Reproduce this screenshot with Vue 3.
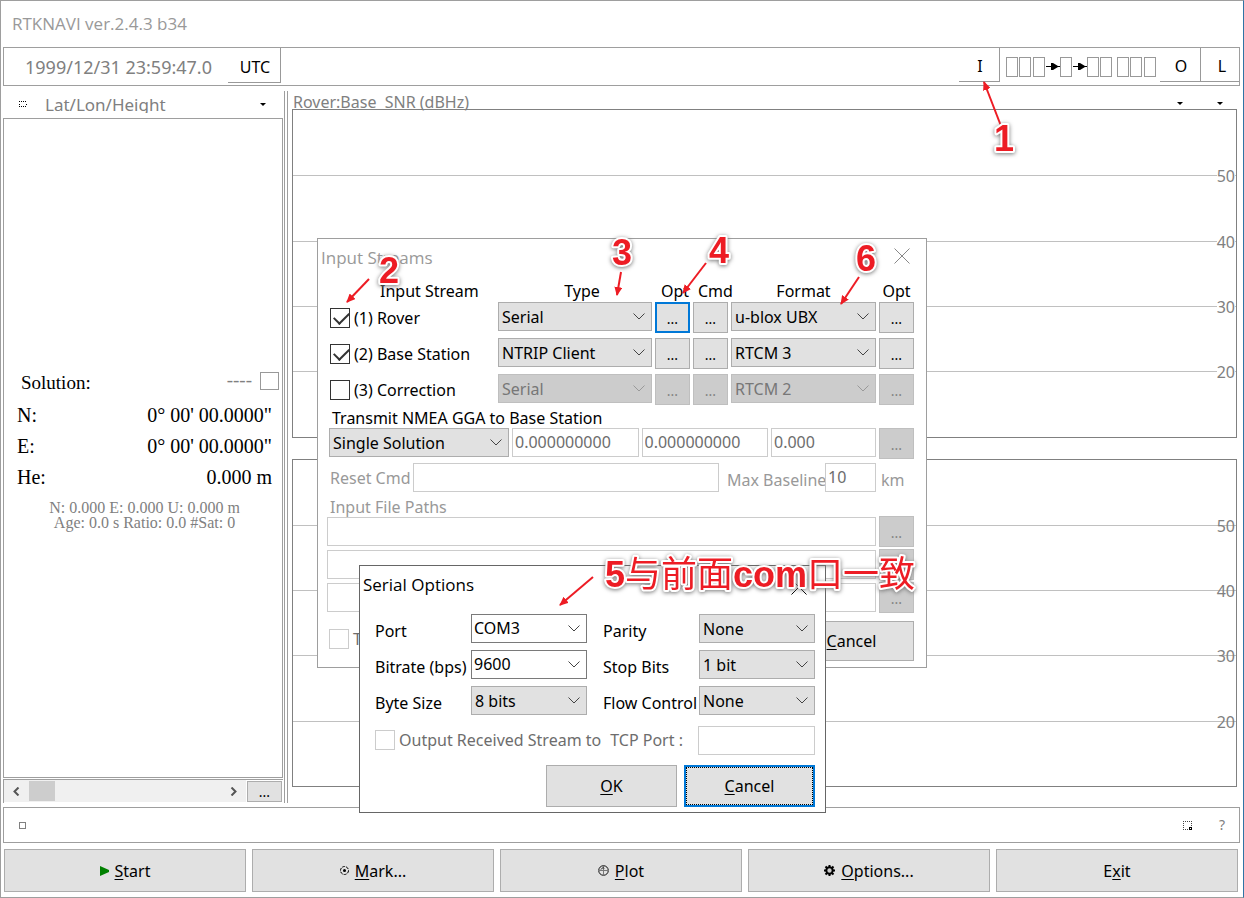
<script setup>
import { ref } from 'vue'

const streams = ref([
  { id: 1, name: '(1) Rover', on: true, type: 'Serial', format: 'u-blox UBX', off: false, focus: true },
  { id: 2, name: '(2) Base Station', on: true, type: 'NTRIP Client', format: 'RTCM 3', off: false },
  { id: 3, name: '(3) Correction', on: false, type: 'Serial', format: 'RTCM 2', off: true },
])

const position = [
  { label: 'N:', value: '0° 00\' 00.0000"' },
  { label: 'E:', value: '0° 00\' 00.0000"' },
  { label: 'He:', value: '0.000 m' },
]

const levels = [50, 40, 30, 20]

const serialFields = [
  { id: 'port', label: 'Port', value: 'COM3', edit: true },
  { id: 'parity', label: 'Parity', value: 'None' },
  { id: 'bitrate', label: 'Bitrate (bps)', value: '9600', edit: true },
  { id: 'stop', label: 'Stop Bits', value: '1 bit' },
  { id: 'byte', label: 'Byte Size', value: '8 bits' },
  { id: 'flow', label: 'Flow Control', value: 'None' },
]

const boxes = [0, 13, 27, 54, 81, 94, 111, 124, 138]

const arrows = [
  [1001, 126, 984, 82],
  [369, 279, 347, 302],
  [621, 272, 617, 295],
  [706, 263, 683, 293],
  [859, 277, 841, 304],
  [593, 577, 560, 605],
]
const marks = [
  ['1', 994, 151],
  ['2', 379, 283],
  ['3', 612, 265],
  ['4', 709, 263],
  ['6', 856, 271],
]
</script>

<template>
  <div class="window">
    <header class="title">RTKNAVI ver.2.4.3 b34</header>

    <div class="toolbar">
      <span class="clock">1999/12/31 23:59:47.0</span>
      <button class="flat utc">UTC</button>
      <span class="grow"></span>
      <button class="flat">I</button>
      <svg class="flow" width="152" height="20" viewBox="0 0 152 20" aria-hidden="true">
        <rect v-for="x in boxes" :key="x" :x="x + 0.5" y="0.5" width="11" height="19" fill="#fff" stroke="#999" />
        <g fill="#000">
          <path d="M40 9h14v1H40zM45 6h2l5 3v1l-5 3h-2z" />
          <path d="M67 9h14v1H67zM72 6h2l5 3v1l-5 3h-2z" />
        </g>
      </svg>
      <button class="flat">O</button>
      <button class="flat last">L</button>
    </div>

    <main class="main">
      <section class="left">
        <div class="lefthead">
          <svg width="8" height="6" viewBox="0 0 8 6" aria-hidden="true">
            <path d="M0 .5h8M0 5.5h8M0 3.5h1M7 3.5h1" stroke="#000" stroke-dasharray="1 1" />
          </svg>
          <span class="mode">Lat/Lon/Height</span>
          <button class="drop" aria-label="Coordinate format">
            <svg width="6" height="3" viewBox="0 0 6 3"><path d="M0 0h6L3 3z" /></svg>
          </button>
        </div>
        <div class="solution">
          <div class="status">
            <span>Solution:</span>
            <span class="dashes">----</span>
            <span class="lamp"></span>
          </div>
          <div v-for="p in position" :key="p.label" class="coord">
            <span>{{ p.label }}</span><span>{{ p.value }}</span>
          </div>
          <div class="detail">N: 0.000 E: 0.000 U: 0.000 m<br />Age: 0.0 s Ratio: 0.0 #Sat: 0</div>
        </div>
        <div class="scroll">
          <div class="track">
            <svg width="7" height="9" viewBox="0 0 7 9"><path d="M5.500.5l-4 4 4 4" fill="none" stroke="#555" stroke-width="2" /></svg>
            <span class="thumb"></span>
            <span class="grow"></span>
            <svg width="7" height="9" viewBox="0 0 7 9"><path d="M1.500.5l4 4-4 4" fill="none" stroke="#555" stroke-width="2" /></svg>
          </div>
          <button class="btn dots">...</button>
        </div>
      </section>
      <div class="splitter"></div>
      <section class="right">
        <div class="plothead">
          <span>Rover:Base&nbsp; SNR (dBHz)</span>
          <span class="grow"></span>
          <button class="drop" aria-label="Signal"><svg width="6" height="3" viewBox="0 0 6 3"><path d="M0 0h6L3 3z" /></svg></button>
          <button class="drop" aria-label="Plot type"><svg width="6" height="3" viewBox="0 0 6 3"><path d="M0 0h6L3 3z" /></svg></button>
        </div>
        <div v-for="n in 2" :key="n" class="plot">
          <div></div>
          <div v-for="l in levels" :key="l" class="band"><span :class="{ solid: n === 1 }">{{ l }}</span></div>
        </div>
      </section>
    </main>

    <div class="statusbar">
      <svg width="7" height="7" viewBox="0 0 7 7" aria-hidden="true"><rect x=".5" y=".5" width="6" height="6" fill="none" stroke="#808080" /></svg>
      <span class="grow"></span>
      <svg width="9" height="9" viewBox="0 0 9 9" aria-hidden="true">
        <path d="M0 .5h9M0 8.500h9M.5 2v6M8.500 2v6" fill="none" stroke="#444" stroke-dasharray="1 1" />
        <rect x="6.500" y="6.500" width="2" height="2" fill="#fff" stroke="#000" />
      </svg>
      <span class="help">?</span>
    </div>

    <footer class="actions">
      <button class="btn">
        <svg width="9" height="10" viewBox="0 0 9 10"><path d="M0 0l9 4v2l-9 4z" fill="#008000" /></svg>
        <span><u>S</u>tart</span>
      </button>
      <button class="btn">
        <svg width="9" height="9" viewBox="0 0 9 9"><circle cx="4.500" cy="4.500" r="4" fill="none" stroke="#000" stroke-dasharray="3 1" /><circle cx="4.500" cy="4.500" r="1.500" /></svg>
        <span><u>M</u>ark...</span>
      </button>
      <button class="btn">
        <svg width="11" height="11" viewBox="0 0 11 11" fill="none"><circle cx="5.500" cy="5.500" r="4.800" stroke="#111" /><path d="M0 5.500h11M5.500 1v9.500" stroke="#777" /><path d="M3 4.500l2-2 1 1" stroke="#111" /></svg>
        <span><u>P</u>lot</span>
      </button>
      <button class="btn">
        <svg width="11" height="11" viewBox="0 0 11 11"><circle cx="5.500" cy="5.500" r="3.200" fill="#ccc" stroke="#000" stroke-width="2" /><path d="M5.500 0v2M5.500 9v2M0 5.500h2M9 5.500h2M1.500 1.500l1.500 1.500M8 8l1.500 1.500M9.500 1.500L8 3M3 8L1.500 9.500" stroke="#000" stroke-width="2" /></svg>
        <span><u>O</u>ptions...</span>
      </button>
      <button class="btn"><span>E<u>x</u>it</span></button>
    </footer>

    <section class="dialog inputs">
      <header class="dtitle">
        <span>Input Streams</span>
        <button class="close" aria-label="Close input streams"><svg width="16" height="16" viewBox="0 0 16 16"><path d="M.5.5l15 15M15.500.5l-15 15" stroke="#888" /></svg></button>
      </header>
      <div class="grid heads">
        <span class="hstream">Input Stream</span><span class="htype">Type</span><span class="hopt">Opt</span><span class="hopt">Cmd</span><span>Format</span><span>Opt</span>
      </div>
      <div v-for="s in streams" :key="s.id" class="grid row" :class="{ off: s.off }">
        <label class="check"><input v-model="s.on" type="checkbox" />{{ s.name }}</label>
        <span class="combo">
          <select :disabled="s.off" :aria-label="s.name + ' type'"><option>{{ s.type }}</option></select>
          <svg width="12" height="7" viewBox="0 0 12 7"><path d="M.5.5L6 6 11.500.5" /></svg>
        </span>
        <button class="btn dots" :class="{ focus: s.focus }" :disabled="s.off">...</button>
        <button class="btn dots" :disabled="s.off">...</button>
        <span class="combo">
          <select :disabled="s.off" :aria-label="s.name + ' format'"><option>{{ s.format }}</option></select>
          <svg width="12" height="7" viewBox="0 0 12 7"><path d="M.5.5L6 6 11.500.5" /></svg>
        </span>
        <button class="btn dots" :disabled="s.off">...</button>
      </div>
      <label class="nmealabel" for="nmea">Transmit NMEA GGA to Base Station</label>
      <div class="nmea">
        <span class="combo">
          <select id="nmea"><option>Single Solution</option></select>
          <svg width="12" height="7" viewBox="0 0 12 7"><path d="M.5.5L6 6 11.500.5" /></svg>
        </span>
        <input class="text" disabled value="0.000000000" aria-label="Latitude" />
        <input class="text" disabled value="0.000000000" aria-label="Longitude" />
        <input class="text" disabled value="0.000" aria-label="Height" />
        <button class="btn dots" disabled>...</button>
      </div>
      <div class="reset">
        <label for="reset">Reset Cmd</label>
        <input id="reset" class="text" disabled />
        <label class="baselabel" for="baseline">Max Baseline</label>
        <input id="baseline" class="text" disabled value="10" />
        <span class="km">km</span>
      </div>
      <label class="pathlabel" for="path1">Input File Paths</label>
      <div v-for="n in 3" :key="n" class="path">
        <input :id="'path' + n" class="text" disabled :aria-label="'Input file path ' + n" />
        <button class="btn dots" disabled>...</button>
      </div>
      <div class="dfoot">
        <label class="check faded"><input type="checkbox" disabled />Time</label>
        <span class="grow"></span>
        <button class="btn big"><span><u>C</u>ancel</span></button>
      </div>
    </section>

    <section class="dialog serial">
      <header class="dtitle">
        <span>Serial Options</span>
        <button class="close" aria-label="Close serial options"><svg width="16" height="16" viewBox="0 0 16 16"><path d="M.5.5l15 15M15.500.5l-15 15" stroke="#000" /></svg></button>
      </header>
      <div class="fields">
        <template v-for="f in serialFields" :key="f.id">
          <label :for="f.id">{{ f.label }}</label>
          <span class="combo" :class="{ edit: f.edit }">
            <select :id="f.id"><option>{{ f.value }}</option></select>
            <svg width="12" height="7" viewBox="0 0 12 7"><path d="M.5.5L6 6 11.500.5" /></svg>
          </span>
        </template>
      </div>
      <div class="tcp">
        <label class="check faded"><input type="checkbox" disabled />Output Received Stream to</label>
        <label class="tcplabel" for="tcp">TCP Port :</label>
        <input id="tcp" class="text" disabled />
      </div>
      <div class="sfoot">
        <button class="btn big"><span><u>O</u>K</span></button>
        <button class="btn big focus dotted"><span><u>C</u>ancel</span></button>
      </div>
    </section>

    <svg class="notes" width="1244" height="898" viewBox="0 0 1244 898">
      <defs>
        <marker id="tip" markerWidth="9" markerHeight="8" refX="8" refY="4" orient="auto" markerUnits="userSpaceOnUse">
          <path d="M0 0l9 4-9 4z" fill="#ed1c24" />
        </marker>
      </defs>
      <line v-for="(a, i) in arrows" :key="i" :x1="a[0]" :y1="a[1]" :x2="a[2]" :y2="a[3]" marker-end="url(#tip)" />
      <text v-for="m in marks" :key="m[0]" :x="m[1]" :y="m[2]">{{ m[0] }}</text>
      <text x="605" y="587">5<tspan class="han">与前面</tspan>com<tspan class="han">口一致</tspan></text>
    </svg>
  </div>
</template>

<style>
body {
  background: #fff;
}
</style>

<style scoped>
* {
  box-sizing: border-box;
}
.window {
  position: relative;
  display: flex;
  flex-direction: column;
  min-height: 100vh;
  padding: 0 3px 5px 2px;
  border: 1px solid #9e9e9e;
  border-right-color: #2f74a5;
  overflow: hidden;
  background: #fff;
  color: #000;
  font: 16px/20px "Noto Sans", sans-serif;
}
button,
input,
select {
  margin: 0;
  font: inherit;
  color: inherit;
}
button {
  padding: 0;
}
.grow {
  flex: 1;
}
.title {
  height: 46px;
  padding: 13px 9px;
  color: #999;
  font-family: "Open Sans", sans-serif;
  font-size: 17px;
}
.toolbar {
  display: flex;
  height: 39px;
  border: 1px solid #9e9e9e;
}
.clock {
  width: 224px;
  padding: 9px 0 0 21px;
  color: #808080;
  font-size: 18px;
}
.flat {
  width: 41px;
  height: 34px;
  padding: 2px 0 0 2px;
  border: solid #999;
  border-width: 0 1px 1px 0;
  background: #fff;
}
.flat.utc {
  width: 53px;
  height: 35px;
  padding-top: 3px;
}
.flat.last {
  width: 38px;
  padding-left: 4px;
  border-right: 0;
}
.flow {
  margin: 9px 2px 0 6px;
}
.main {
  flex: 1;
  display: flex;
}
.left {
  width: 280px;
  display: flex;
  flex-direction: column;
}
.lefthead {
  display: flex;
  align-items: center;
  height: 32px;
  padding: 4px 17px 0 16px;
}
.mode {
  flex: 1;
  height: 18px;
  margin-left: 18px;
  overflow: hidden;
  color: #808080;
  font-size: 17px;
}
.drop {
  display: flex;
  border: 0;
  background: none;
}
.solution {
  flex: 1;
  display: flex;
  flex-direction: column;
  justify-content: center;
  padding: 3px 10px 0 13px;
  border: 1px solid #9e9e9e;
  font-family: "Liberation Serif", serif;
  font-size: 20px;
}
.status {
  display: flex;
  align-items: center;
  height: 28px;
  margin: 0 -7px 0 4px;
  font-size: 19px;
}
.dashes {
  flex: 1;
  margin-right: 8px;
  text-align: right;
  color: #808080;
  line-height: 14px;
  padding-bottom: 6px;
}
.lamp {
  width: 19px;
  height: 18px;
  margin-bottom: 4px;
  border: 1px solid #999;
}
.coord {
  display: flex;
  justify-content: space-between;
  height: 31px;
  line-height: 36px;
}
.detail {
  margin-top: 10px;
  text-align: center;
  color: #808080;
  font-size: 16px;
  line-height: 15px;
}
.scroll {
  display: flex;
  height: 24px;
  margin-top: 1px;
  padding-bottom: 1px;
  border-top: 1px solid #9e9e9e;
  border-left: 1px solid #9e9e9e;
}
.track {
  flex: 1;
  display: flex;
  align-items: center;
  padding: 0 9px;
  background: #f0f0f0;
}
.thumb {
  width: 26px;
  height: 20px;
  margin-left: 9px;
  background: #cdcdcd;
}
.splitter {
  width: 4px;
  margin: 5px 4px 0 1px;
  border: solid #9e9e9e;
  border-width: 0 1px;
}
.right {
  flex: 1;
  display: flex;
  flex-direction: column;
  gap: 21px;
  padding: 0 3px 16px 0;
}
.plothead {
  display: flex;
  align-items: center;
  gap: 34px;
  height: 23px;
  margin-bottom: -21px;
  padding: 8px 14px 0 1px;
  color: #808080;
}
.plothead .drop {
  padding-top: 3px;
}
.plot {
  flex: 1;
  display: grid;
  grid-template-rows: repeat(5, 1fr);
  border: 1px solid #808080;
}
.band {
  position: relative;
  border-top: 1px solid #c0c0c0;
}
.band span {
  position: absolute;
  right: 1px;
  top: -10px;
  color: #808080;
}
.band .solid {
  background: #fff;
}
.statusbar {
  display: flex;
  align-items: center;
  height: 36px;
  margin-top: 4px;
  padding: 0 14px 0 15px;
  border: 1px solid #9e9e9e;
}
.help {
  margin-left: 27px;
  color: #808080;
  font-size: 14px;
}
.actions {
  display: grid;
  grid-template-columns: repeat(5, 1fr);
  gap: 6px;
  margin: 6px 2px 0 1px;
}
.actions .btn {
  gap: 6px;
  height: 43px;
}
.btn {
  display: flex;
  align-items: center;
  justify-content: center;
  border: 1px solid #adadad;
  background: #e1e1e1;
}
.btn u {
  text-underline-offset: 2px;
}
.dots {
  width: 35px;
  height: 31px;
  padding-top: 2px;
  font-size: 14px;
}
.scroll .dots {
  height: 21px;
  margin: 1px;
  padding: 0;
}
.btn:disabled {
  border-color: #bfbfbf;
  background: #ccc;
  color: #838383;
}
.focus {
  border: 2px solid #0078d7;
}
.dialog {
  position: absolute;
  border: 1px solid #9e9e9e;
  background: #fff;
}
.inputs {
  left: 316px;
  top: 237px;
  width: 610px;
  padding: 0 12px 6px 11px;
}
.dtitle {
  display: flex;
  justify-content: space-between;
  height: 42px;
  padding-top: 9px;
  font-family: "Open Sans", sans-serif;
  font-size: 17px;
}
.inputs .dtitle {
  margin-left: -8px;
  padding-right: 4px;
  color: #999;
}
.close {
  display: flex;
  height: 16px;
  border: 0;
  background: none;
}
.grid {
  display: grid;
  grid-template-columns: 1fr 154px 35px 35px 145px 35px;
  column-gap: 3px;
}
.heads {
  height: 21px;
  text-align: center;
}
.hstream {
  padding-left: 51px;
  text-align: left;
}
.htype {
  padding-left: 14px;
}
.hopt {
  padding-left: 5px;
}
.row {
  height: 36px;
}
.check {
  display: flex;
  align-items: center;
  gap: 4px;
  height: 32px;
  white-space: nowrap;
}
.check input {
  appearance: none;
  display: grid;
  width: 20px;
  height: 20px;
  margin-left: 1px;
  border: 1px solid #333;
  background: #fff;
}
.check input:checked::after {
  content: "";
  width: 13px;
  height: 7px;
  margin: 3px 0 0 3px;
  border: solid #333;
  border-width: 0 0 2px 2px;
  transform: rotate(-45deg);
}
.check input:disabled {
  margin-left: 0;
  border-color: #ccc;
}
.faded {
  color: #6d6d6d;
}
.combo {
  display: grid;
  height: 29px;
}
.combo select {
  grid-area: 1 / 1;
  appearance: none;
  width: 100%;
  height: 29px;
  padding: 0 3px;
  border: 1px solid #adadad;
  border-radius: 0;
  background: #e1e1e1;
  line-height: 20px;
  opacity: 1;
}
.combo select:disabled {
  border-color: #bfbfbf;
  background: #ccc;
  color: #777;
}
.combo svg {
  grid-area: 1 / 1;
  place-self: center end;
  margin-right: 7px;
  fill: none;
  stroke: #444;
  pointer-events: none;
}
.off .combo svg {
  stroke: #999;
}
.combo.edit select {
  padding: 0 2px 1px;
  border-color: #7a7a7a;
  background: #fff;
}
.text {
  min-width: 0;
  height: 29px;
  padding: 0 2px 2px;
  border: 1px solid #ccc;
  background: #fff;
  color: #6d6d6d;
}
.nmealabel {
  display: block;
  height: 20px;
  margin: -2px 0 0 3px;
}
.nmea {
  display: grid;
  grid-template-columns: 180px 1fr 1fr 105px 35px;
  column-gap: 3px;
  height: 35px;
}
.reset {
  display: grid;
  grid-template-columns: 83px 1fr 106px 51px 38px;
  height: 34px;
  padding-left: 1px;
  color: #999;
  white-space: nowrap;
}
.reset label {
  padding-top: 5px;
}
.reset .baselabel {
  padding: 7px 0 0 8px;
}
.km {
  padding: 7px 0 0 5px;
}
.pathlabel {
  display: block;
  height: 19px;
  margin-left: 1px;
  color: #999;
}
.path {
  display: flex;
  align-items: center;
  gap: 3px;
  height: 31px;
  margin: 0 0 2px -2px;
}
.path .text {
  flex: 1;
}
.dfoot {
  display: flex;
  padding-top: 6px;
}
.dfoot .big {
  width: 125px;
  height: 40px;
}
.dfoot .check {
  height: 36px;
}
.serial {
  left: 358px;
  top: 564px;
  width: 467px;
  padding: 0 10px 5px 15px;
  border-color: #666;
}
.serial .dtitle {
  height: 48px;
  margin-left: -12px;
  padding-right: 8px;
}
.serial .close {
  margin-top: 4px;
}
.fields {
  display: grid;
  grid-template-columns: 96px 116px 1fr 116px;
  grid-auto-rows: 36px;
}
.fields label {
  padding-top: 7px;
  white-space: nowrap;
}
.fields label:nth-of-type(even) {
  padding-left: 16px;
}
.tcp {
  display: flex;
  align-items: center;
  padding-top: 2px;
}
.tcplabel {
  flex: 1;
  padding-left: 9px;
  color: #6d6d6d;
}
.tcp .text {
  width: 117px;
}
.sfoot {
  display: flex;
  justify-content: flex-end;
  gap: 7px;
  margin-top: 9px;
}
.sfoot .big {
  width: 131px;
  height: 42px;
}
.dotted {
  outline: 1px dotted #000;
  outline-offset: -3px;
}
.notes {
  position: absolute;
  left: -1px;
  top: -1px;
  pointer-events: none;
}
.notes line {
  stroke: #ed1c24;
  stroke-width: 2;
}
.notes text {
  fill: #ed1c24;
  stroke: #fff;
  stroke-width: 4;
  stroke-linejoin: round;
  paint-order: stroke;
  filter: drop-shadow(0 1px 2px #777);
  font-family: "Liberation Sans", Arial, sans-serif;
  font-size: 36px;
  font-weight: 700;
}
.notes .han {
  font-family: "Noto Sans CJK SC", sans-serif;
  font-weight: 400;
}
</style>
